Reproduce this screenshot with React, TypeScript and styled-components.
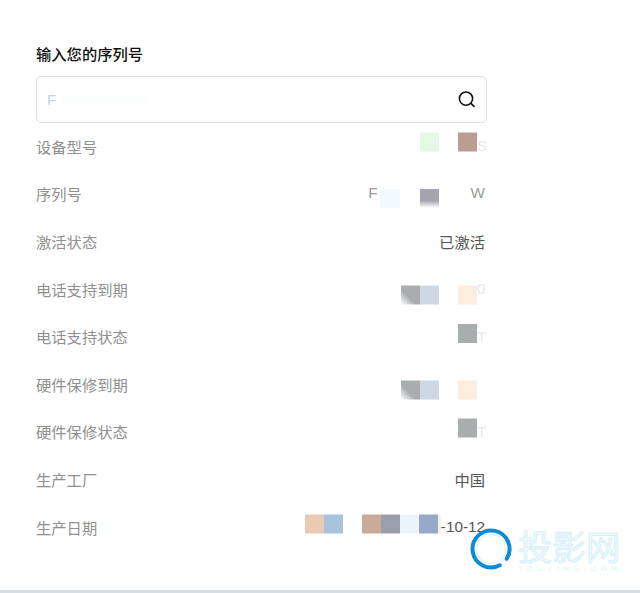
import styled, { createGlobalStyle } from "styled-components";

const GlobalStyle = createGlobalStyle`
  html, body {
    margin: 0;
    background: #fff;
  }
  body {
    font-family: "Liberation Sans", "Noto Sans CJK SC", sans-serif;
  }
`;

type Block = {
  color?: string;
  fade?: string;
  text?: string;
  faint?: boolean;
  soft?: boolean;
  size?: number;
};

type Info = {
  label: string;
  value?: string;
  lift?: number;
  blocks?: Block[];
};

const gray = "#a9adae";
const blue = "#ccd8e6";
const peach = "#fbeee0";

const rows: Info[] = [
  {
    label: "设备型号",
    lift: -4.5,
    blocks: [
      { color: "#e4f8e4" },
      { size: 19 },
      { color: "#bb9d92" },
      { text: "S", faint: true },
    ],
  },
  {
    label: "序列号",
    lift: 4,
    blocks: [
      { text: "F", soft: true },
      { size: 2 },
      { color: "#f0fbfd", size: 20 },
      { size: 20 },
      { color: "#a5a4af", fade: "to bottom" },
      { size: 32 },
      { text: "W", soft: true },
    ],
  },
  { label: "激活状态", value: "已激活" },
  {
    label: "电话支持到期",
    lift: 5.5,
    blocks: [
      { color: gray, fade: "to bottom left" },
      { color: blue },
      { size: 19 },
      { color: peach },
      { text: "0", faint: true },
    ],
  },
  {
    label: "电话支持状态",
    lift: -4,
    blocks: [{ color: gray }, { text: "T", faint: true }],
  },
  {
    label: "硬件保修到期",
    lift: 5.5,
    blocks: [
      { color: gray, fade: "to bottom left" },
      { color: blue },
      { size: 19 },
      { color: peach },
      { size: 8 },
    ],
  },
  {
    label: "硬件保修状态",
    lift: -4.5,
    blocks: [{ color: gray }, { text: "T", faint: true }],
  },
  { label: "生产工厂", value: "中国" },
  {
    label: "生产日期",
    lift: -3.5,
    blocks: [
      { color: "#e8cbb0" },
      { color: "#a9c3dc" },
      { size: 19 },
      { color: "#c9ab97" },
      { color: "#9a9fae" },
      { color: "#eaf5fb" },
      { color: "#95aac8" },
      { color: "#f6f1e6", size: 3 },
      { text: "-10-12" },
    ],
  },
];

const App = () => {
  return (
    <Page>
      <GlobalStyle />
      <Content>
        <Title>输入您的序列号</Title>
        <SearchField>
          <Serial>F</Serial>
          <Smudge />
          <SearchIcon viewBox="0 0 18 18">
            <circle cx="8" cy="7.6" r="6.6" />
            <path d="M13 12.4 16 15.4" />
          </SearchIcon>
        </SearchField>
        {rows.map((row) => (
          <Row key={row.label}>
            <Label>{row.label}</Label>
            {row.value && <Value>{row.value}</Value>}
            {row.blocks && (
              <Strip>
                {row.blocks.map((b, i) =>
                  b.text ? (
                    b.faint ? (
                      <FaintChar key={i}>{b.text}</FaintChar>
                    ) : (
                      <Value key={i} $soft={b.soft}>
                        {b.text}
                      </Value>
                    )
                  ) : (
                    <Patch
                      key={i}
                      $color={b.color}
                      $fade={b.fade}
                      $size={b.size || 19}
                      $lift={row.lift || 0}
                    />
                  )
                )}
              </Strip>
            )}
          </Row>
        ))}
      </Content>
      <BottomBar />
      <Watermark>
        <svg width="44" height="44" viewBox="0 0 44 44" fill="none">
          <circle cx="22" cy="22" r="14.5" stroke="#e6f6fb" strokeWidth="2" />
          <path
            d="M37.7 31.8A18.5 18.5 0 1 0 30.7 38.3"
            stroke="#0e8ad6"
            strokeWidth="4"
            strokeLinecap="round"
          />
        </svg>
        <Brand>
          <BrandName>投影网</BrandName>
          <BrandUrl>TOUYING.COM</BrandUrl>
        </Brand>
      </Watermark>
    </Page>
  );
};

export default App;

const Page = styled.div`
  position: relative;
  display: flex;
  flex-direction: column;
  min-height: 593px;
  overflow: hidden;
`;

const Content = styled.main`
  flex: 1;
  display: flex;
  flex-direction: column;
  width: 451px;
  padding: 44px 0 0 36px;
`;

const Title = styled.h2`
  margin: 0 0 11px;
  font-size: 15.3px;
  line-height: 21px;
  font-weight: 500;
  color: #111;
`;

const SearchField = styled.div`
  box-sizing: border-box;
  display: flex;
  align-items: center;
  height: 47px;
  padding: 0 10px;
  border: 1px solid #dcdfe4;
  border-radius: 5px;
  background: #fff;
`;

const Serial = styled.span`
  font-size: 15px;
  color: #c3d2ea;
`;

const Smudge = styled.span`
  width: 88px;
  height: 10px;
  margin-left: 3px;
  background: #fcfdff;
`;

const SearchIcon = styled.svg`
  width: 18px;
  height: 18px;
  margin-left: auto;
  fill: none;
  stroke: #111;
  stroke-width: 1.6;
  stroke-linecap: round;
`;

const Row = styled.div`
  display: flex;
  align-items: center;
  justify-content: space-between;
  height: 47.6px;
  padding-right: 2px;
`;

const Label = styled.span`
  margin-top: -2px;
  font-size: 15.3px;
  color: #909090;
`;

const Value = styled.span<{ $soft?: boolean }>`
  margin-top: -2px;
  font-size: 15.3px;
  color: ${(p) => (p.$soft ? "#9a9a9a" : "#555")};
`;

const FaintChar = styled.span`
  width: 8px;
  margin-top: -2px;
  font-size: 15px;
  color: #e6e8ea;
`;

const Strip = styled.div`
  display: flex;
  align-items: center;
  justify-content: flex-end;
`;

const Patch = styled.span<{
  $color?: string;
  $fade?: string;
  $size: number;
  $lift: number;
}>`
  width: ${(p) => p.$size}px;
  height: 19px;
  transform: translateY(${(p) => p.$lift}px);
  background: ${(p) =>
    p.$fade && p.$color
      ? `linear-gradient(${p.$fade}, ${p.$color} 60%, #fff 100%)`
      : p.$color || "transparent"};
`;

const BottomBar = styled.div`
  height: 3px;
  background: #d5dde5;
`;

const Watermark = styled.div`
  position: absolute;
  left: 469px;
  top: 527px;
  display: flex;
  gap: 5px;
`;

const Brand = styled.div`
  display: flex;
  flex-direction: column;
  padding-top: 4px;
`;

const BrandName = styled.span`
  font-size: 34px;
  line-height: 34px;
  color: #f0fafd;
  -webkit-text-stroke: 1px #d6f0f9;
  white-space: nowrap;
`;

const BrandUrl = styled.span`
  font-size: 7px;
  line-height: 8px;
  letter-spacing: 4.9px;
  color: #e0f3fa;
  white-space: nowrap;
`;
